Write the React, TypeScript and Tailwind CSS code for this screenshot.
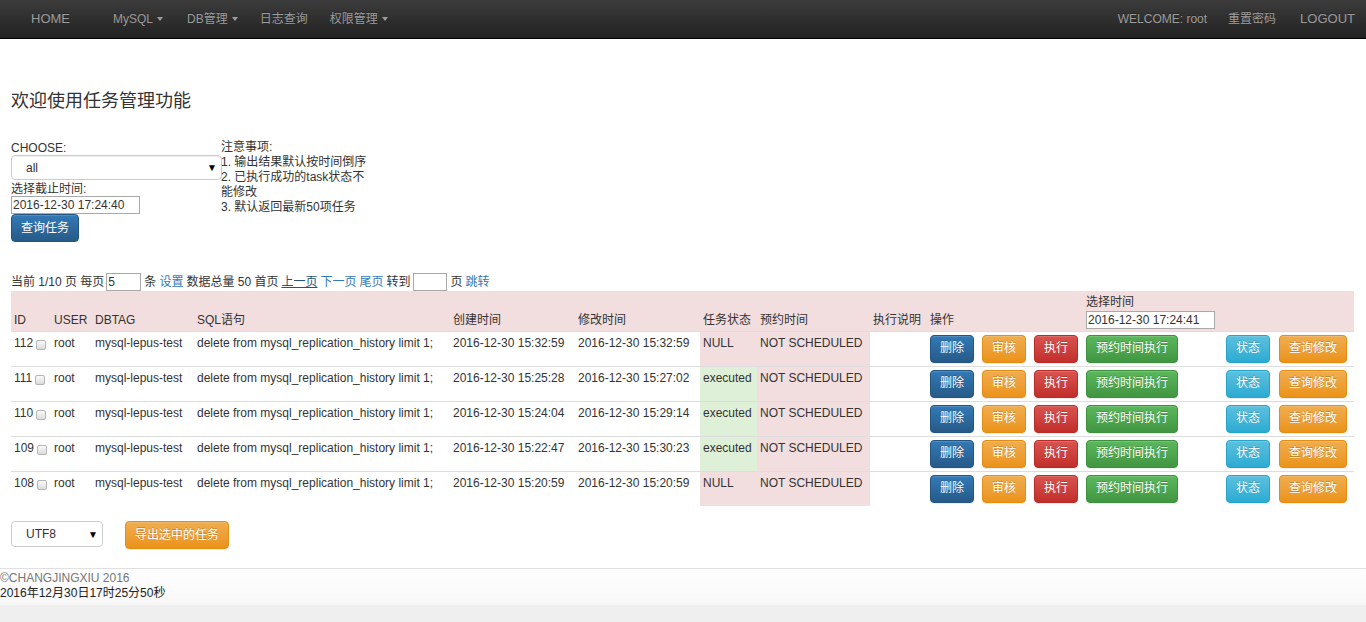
import React from 'react'

const rows = [
  { id: 112, created: '2016-12-30 15:32:59', modified: '2016-12-30 15:32:59', status: 'NULL' },
  { id: 111, created: '2016-12-30 15:25:28', modified: '2016-12-30 15:27:02', status: 'executed' },
  { id: 110, created: '2016-12-30 15:24:04', modified: '2016-12-30 15:29:14', status: 'executed' },
  { id: 109, created: '2016-12-30 15:22:47', modified: '2016-12-30 15:30:23', status: 'executed' },
  { id: 108, created: '2016-12-30 15:20:59', modified: '2016-12-30 15:20:59', status: 'NULL' },
]

const colWidths = [40, 41, 102, 256, 125, 125, 57, 113, 57, 52, 52, 52, 140, 53, 78]

const btnBase =
  'inline-flex h-[28px] items-center rounded-[4px] border px-[9px] text-[12px] text-white [text-shadow:0_-1px_0_rgba(0,0,0,0.2)] shadow-[inset_0_1px_0_rgba(255,255,255,0.15),0_1px_1px_rgba(0,0,0,0.075)]'

const variants = {
  primary: 'bg-linear-to-b from-[#337ab7] to-[#265a88] border-[#245580]',
  warning: 'bg-linear-to-b from-[#f0ad4e] to-[#eb9316] border-[#e38d13]',
  danger: 'bg-linear-to-b from-[#d9534f] to-[#c12e2a] border-[#b92c28]',
  success: 'bg-linear-to-b from-[#5cb85c] to-[#419641] border-[#3e8f3e]',
  info: 'bg-linear-to-b from-[#5bc0de] to-[#2aabd2] border-[#28a4c9]',
}

function Btn({ variant, children }: { variant: keyof typeof variants; children: React.ReactNode }) {
  return <span className={`${btnBase} ${variants[variant]}`}>{children}</span>
}

function Caret() {
  return <span className="ml-[4px] inline-block border-x-[3.5px] border-t-[4px] border-x-transparent border-t-[#9d9d9d] align-middle" />
}

function NavBar() {
  return (
    <div className="flex h-[39px] items-center border-b border-black bg-linear-to-b from-[#3c3c3c] to-[#222] text-[13px] text-[#9d9d9d] [text-shadow:0_-1px_0_rgba(0,0,0,0.25)]">
      <span className="ml-[31px]">HOME</span>
      <span className="ml-[43px] flex items-center text-[12px]">MySQL<Caret /></span>
      <span className="ml-[24px] flex items-center text-[12px]">DB管理<Caret /></span>
      <span className="ml-[22px] text-[12px]">日志查询</span>
      <span className="ml-[22px] flex items-center text-[12px]">权限管理<Caret /></span>
      <div className="ml-auto flex items-center">
        <span className="text-[12px]">WELCOME: root</span>
        <span className="ml-[21px] text-[12px]">重置密码</span>
        <span className="ml-[24px] mr-[11px]">LOGOUT</span>
      </div>
    </div>
  )
}

function Checkbox() {
  return (
    <span className="ml-[3px] inline-block h-[10px] w-[10px] translate-y-[2px] rounded-[2px] border border-[#b5b5b5] bg-linear-to-b from-[#fafafa] to-[#dcdcdc] align-middle" />
  )
}

export default function App() {
  return (
    <div className="min-h-[622px] bg-[#efefef] font-['Liberation_Sans','Noto_Sans_CJK_SC',sans-serif] text-[#333]">
      <div className="bg-white">
        <NavBar />
        <div className="px-[11px]">
          <h1 className="pt-[50px] text-[18px] leading-[24px] text-[#333]">欢迎使用任务管理功能</h1>

          <div className="mt-[27px] flex text-[12px] leading-[14px]">
            <div className="w-[210px]">
              <div className="pt-[1px]">CHOOSE:</div>
              <div className="flex h-[25px] w-[211px] items-center justify-between rounded-[4px] border border-[#ccc] pr-[4px] pl-[14px] text-[12px] shadow-[inset_0_1px_1px_rgba(0,0,0,0.075)]">
                <span>all</span>
                <span className="text-[10px] text-black">▼</span>
              </div>
              <div className="mt-[2px]">选择截止时间:</div>
              <div className="h-[18px] w-[129px] border border-[#a9a9a9] px-[1px] text-[12px] leading-[16px]">2016-12-30 17:24:40</div>
              <div className="flex h-[28px] w-[68px] items-center justify-center rounded-[4px] border border-[#245580] bg-linear-to-b from-[#337ab7] to-[#265a88] text-[12px] text-white shadow-[inset_0_1px_0_rgba(255,255,255,0.15)]">
                查询任务
              </div>
            </div>
            <div className="w-[150px] leading-[15px]">
              <div>注意事项:</div>
              <div className="whitespace-nowrap">1. 输出结果默认按时间倒序</div>
              <div>2. 已执行成功的task状态不能修改</div>
              <div>3. 默认返回最新50项任务</div>
            </div>
          </div>

          <div className="mt-[31px] flex h-[18px] items-center text-[12px]">
            <span>当前 1/10 页 每页</span>
            <span className="ml-[2px] h-[18px] w-[35px] border border-[#a9a9a9] px-[1px] leading-[16px]">5</span>
            <span className="ml-[3px]">条</span>
            <span className="ml-[3px] text-[#337ab7]">设置</span>
            <span className="ml-[3px]">数据总量 50 首页</span>
            <span className="ml-[3px] text-[#23527c] underline">上一页</span>
            <span className="ml-[3px] text-[#337ab7]">下一页</span>
            <span className="ml-[3px] text-[#337ab7]">尾页</span>
            <span className="ml-[3px]">转到</span>
            <span className="ml-[3px] h-[18px] w-[34px] border border-[#a9a9a9]" />
            <span className="ml-[3px]">页</span>
            <span className="ml-[3px] text-[#337ab7]">跳转</span>
          </div>

          <table className="w-[1343px] table-fixed border-collapse text-[12px] leading-[17px]">
            <colgroup>
              {colWidths.map((w, i) => (
                <col key={i} style={{ width: w }} />
              ))}
            </colgroup>
            <thead>
              <tr className="h-[40px] bg-[#f2dede] text-left align-bottom">
                {['ID', 'USER', 'DBTAG', 'SQL语句', '创建时间', '修改时间', '任务状态', '预约时间', '执行说明', '操作', '', ''].map((h, i) => (
                  <th key={i} className="px-[3px] pb-[2px] font-normal whitespace-nowrap">{h}</th>
                ))}
                <th className="px-[3px] pb-[2px] font-normal whitespace-nowrap">
                  <div>选择时间</div>
                  <div className="h-[18px] w-[129px] border border-[#a9a9a9] bg-white px-[1px] leading-[16px]">2016-12-30 17:24:41</div>
                </th>
                <th />
                <th />
              </tr>
            </thead>
            <tbody>
              {rows.map((r) => (
                <tr key={r.id} className="h-[35px] border-t border-[#ddd] align-top">
                  <td className="px-[3px] pt-[3px] whitespace-nowrap">{r.id}<Checkbox /></td>
                  <td className="px-[3px] pt-[3px]">root</td>
                  <td className="px-[3px] pt-[3px] whitespace-nowrap">mysql-lepus-test</td>
                  <td className="px-[3px] pt-[3px] whitespace-nowrap">delete from mysql_replication_history limit 1;</td>
                  <td className="px-[3px] pt-[3px] whitespace-nowrap">{r.created}</td>
                  <td className="px-[3px] pt-[3px] whitespace-nowrap">{r.modified}</td>
                  <td className={`px-[3px] pt-[3px] ${r.status === 'NULL' ? 'bg-[#f2dede]' : 'bg-[#dff0d8]'}`}>{r.status}</td>
                  <td className="bg-[#f2dede] px-[3px] pt-[3px] whitespace-nowrap">NOT SCHEDULED</td>
                  <td className="px-[3px] pt-[3px]" />
                  <td className="px-[3px] py-[3px]"><Btn variant="primary">删除</Btn></td>
                  <td className="px-[3px] py-[3px]"><Btn variant="warning">审核</Btn></td>
                  <td className="px-[3px] py-[3px]"><Btn variant="danger">执行</Btn></td>
                  <td className="px-[3px] py-[3px]"><Btn variant="success">预约时间执行</Btn></td>
                  <td className="px-[3px] py-[3px]"><Btn variant="info">状态</Btn></td>
                  <td className="px-[3px] py-[3px]"><Btn variant="warning">查询修改</Btn></td>
                </tr>
              ))}
            </tbody>
          </table>

          <div className="mt-[15px] flex items-start pb-[19px] text-[12px]">
            <div className="flex h-[26px] w-[92px] items-center justify-between rounded-[4px] border border-[#ccc] pr-[4px] pl-[14px]">
              <span>UTF8</span>
              <span className="text-[10px] text-black">▼</span>
            </div>
            <div className="ml-[22px]">
              <Btn variant="warning">导出选中的任务</Btn>
            </div>
          </div>
        </div>

        <div className="border-t border-[#e0e0e0] bg-linear-to-b from-white to-[#f7f7f7] pt-[2px] pb-[4px] text-[12px] leading-[15px]">
          <div className="text-[#777]">©CHANGJINGXIU 2016</div>
          <div className="text-[#222]">2016年12月30日17时25分50秒</div>
        </div>
      </div>
    </div>
  )
}
